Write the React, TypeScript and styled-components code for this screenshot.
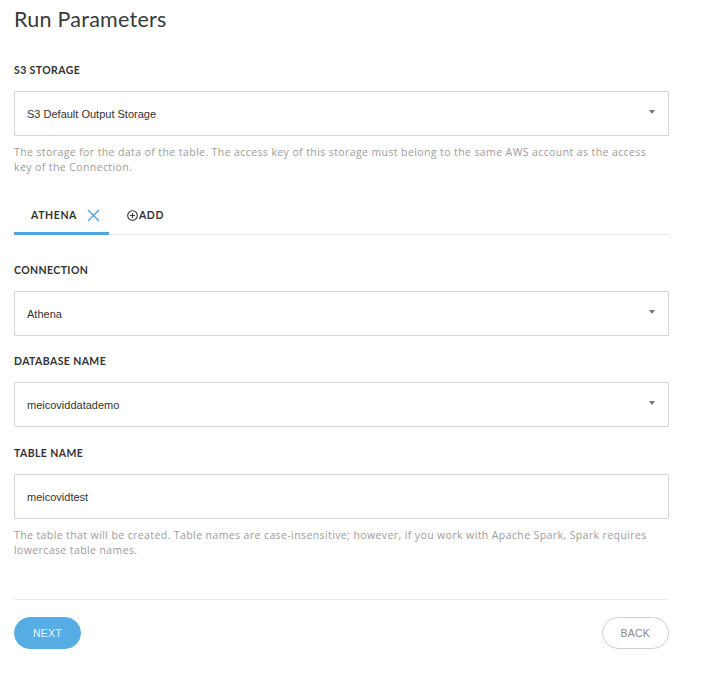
import React from 'react';
import styled, { createGlobalStyle } from 'styled-components';

const GlobalStyle = createGlobalStyle`
  html, body {
    margin: 0;
    padding: 0;
    background: #ffffff;
  }
  body {
    font-family: Lato, "Open Sans", sans-serif;
    color: #333333;
  }
`;

const Page = styled.div`
  width: 655px;
  padding: 7px 0 24px 14px;
`;

const Title = styled.h1`
  margin: 0 0 31px;
  font-size: 21.5px;
  line-height: 25px;
  font-weight: 400;
  color: #3a3a3a;
  letter-spacing: 0.25px;
`;

const Field = styled.div<{ $gap?: number }>`
  margin-top: ${p => p.$gap ?? 0}px;
`;

const Label = styled.div`
  font-size: 10.5px;
  line-height: 14px;
  font-weight: 700;
  letter-spacing: 0.4px;
  text-transform: uppercase;
  color: #333333;
  margin-bottom: 14px;
`;

const Box = styled.div`
  box-sizing: border-box;
  height: 45px;
  border: 1px solid #d6d6d6;
  border-radius: 1px;
  display: flex;
  align-items: center;
  justify-content: space-between;
  padding: 0 13px 0 12px;
  font-family: "Liberation Sans", Arial, sans-serif;
  font-size: 11px;
  color: #333333;
`;

const Caret = styled.span`
  width: 0;
  height: 0;
  border-left: 3px solid transparent;
  border-right: 3px solid transparent;
  border-top: 4px solid #777777;
  margin-top: -3px;
`;

const Help = styled.p`
  margin: 9px 0 0;
  padding-right: 17px;
  font-family: "Open Sans", Lato, sans-serif;
  font-size: 10.5px;
  line-height: 15px;
  letter-spacing: 0.4px;
  color: #9c9c9c;
  font-weight: 400;
`;

const TabBar = styled.div`
  display: flex;
  align-items: stretch;
  margin-top: 21px;
  border-bottom: 1px solid #e8e8e8;
`;

const Tab = styled.div<{ $active?: boolean }>`
  display: flex;
  align-items: center;
  gap: 10px;
  padding: 12px 9px 10px 17px;
  font-size: 10.5px;
  line-height: 14px;
  font-weight: 700;
  letter-spacing: 0.6px;
  color: #333333;
  border-bottom: 3px solid ${p => (p.$active ? '#4ea6dc' : 'transparent')};
  margin-bottom: -1px;
`;

const AddTab = styled(Tab)`
  gap: 1px;
  padding-left: 18px;
`;

const Footer = styled.div`
  margin-top: 41px;
  padding-top: 17px;
  border-top: 1px solid #ececec;
  display: flex;
  justify-content: space-between;
`;

const Button = styled.button<{ $primary?: boolean }>`
  box-sizing: border-box;
  height: 32px;
  padding: 0 18px;
  border-radius: 16px;
  font-family: "Liberation Sans", Arial, sans-serif;
  font-size: 10.5px;
  letter-spacing: 0.2px;
  cursor: pointer;
  background: ${p => (p.$primary ? '#56ade3' : '#ffffff')};
  color: ${p => (p.$primary ? '#eaf5fc' : '#8a8a8a')};
  border: 1px solid ${p => (p.$primary ? '#56ade3' : '#d0d0d0')};
`;

const CloseIcon = () => (
  <svg width="13" height="13" viewBox="0 0 13 13">
    <path d="M1 1 L12 12 M12 1 L1 12" stroke="#4ea6dc" strokeWidth="1.4" fill="none" />
  </svg>
);

const PlusCircle = () => (
  <svg width="11" height="11" viewBox="0 0 11 11">
    <circle cx="5.5" cy="5.5" r="4.8" stroke="#333" strokeWidth="1.1" fill="none" />
    <path d="M5.5 3 V8 M3 5.5 H8" stroke="#333" strokeWidth="1.1" />
  </svg>
);

const Select = ({ value }: { value: string }) => (
  <Box>
    <span>{value}</span>
    <Caret />
  </Box>
);

export default function App() {
  return (
    <>
      <GlobalStyle />
      <Page>
        <Title>Run Parameters</Title>

        <Field>
          <Label>S3 Storage</Label>
          <Select value="S3 Default Output Storage" />
          <Help>
            The storage for the data of the table. The access key of this storage must belong to the same AWS account as the access
            key of the Connection.
          </Help>
        </Field>

        <TabBar>
          <Tab $active>
            ATHENA
            <CloseIcon />
          </Tab>
          <AddTab>
            <PlusCircle />
            ADD
          </AddTab>
        </TabBar>

        <Field $gap={28}>
          <Label>Connection</Label>
          <Select value="Athena" />
        </Field>

        <Field $gap={18}>
          <Label>Database Name</Label>
          <Select value="meicoviddatademo" />
        </Field>

        <Field $gap={19}>
          <Label>Table Name</Label>
          <Box>meicovidtest</Box>
          <Help>
            The table that will be created. Table names are case-insensitive; however, if you work with Apache Spark, Spark requires
            lowercase table names.
          </Help>
        </Field>

        <Footer>
          <Button $primary>NEXT</Button>
          <Button>BACK</Button>
        </Footer>
      </Page>
    </>
  );
}
